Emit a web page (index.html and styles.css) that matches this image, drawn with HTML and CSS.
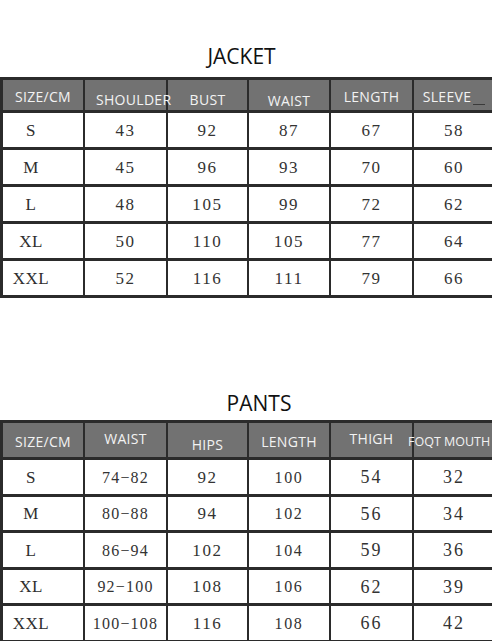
FILE: index.html
```html
<!DOCTYPE html>
<html lang="en">
<head>
<meta charset="utf-8">
<title>Size Chart</title>
<link rel="stylesheet" href="styles.css">
</head>
<body>
<main class="page">
  <section class="chart chart--jacket">
    <h2 class="title title--jacket">JACKET</h2>
    <table class="sizes">
      <colgroup>
        <col class="c1"><col class="c2"><col class="c3"><col class="c4"><col class="c5"><col class="c6">
      </colgroup>
      <thead>
        <tr>
          <th>SIZE/CM</th>
          <th class="h-left h-low">SHOULDER</th>
          <th class="h-low">BUST</th>
          <th class="h-lower">WAIST</th>
          <th>LENGTH</th>
          <th>SLEEVE<span class="dash"></span></th>
        </tr>
      </thead>
      <tbody>
        <tr><td class="size">S</td><td>43</td><td>92</td><td>87</td><td>67</td><td>58</td></tr>
        <tr><td class="size">M</td><td>45</td><td>96</td><td>93</td><td>70</td><td>60</td></tr>
        <tr><td class="size">L</td><td>48</td><td>105</td><td>99</td><td>72</td><td>62</td></tr>
        <tr><td class="size">XL</td><td>50</td><td>110</td><td>105</td><td>77</td><td>64</td></tr>
        <tr><td class="size">XXL</td><td>52</td><td>116</td><td>111</td><td>79</td><td>66</td></tr>
      </tbody>
    </table>
  </section>

  <section class="chart chart--pants">
    <h2 class="title title--pants">PANTS</h2>
    <table class="sizes sizes--pants">
      <colgroup>
        <col class="c1"><col class="c2"><col class="c3"><col class="c4"><col class="c5"><col class="c6">
      </colgroup>
      <thead>
        <tr>
          <th>SIZE/CM</th>
          <th class="h-high">WAIST</th>
          <th class="h-low">HIPS</th>
          <th>LENGTH</th>
          <th class="h-high">THIGH</th>
          <th class="h-left h-wide">FOQT MOUTH</th>
        </tr>
      </thead>
      <tbody>
        <tr><td class="size">S</td><td class="range">74−82</td><td>92</td><td class="small">100</td><td class="big">54</td><td class="big">32</td></tr>
        <tr><td class="size">M</td><td class="range">80−88</td><td>94</td><td class="small">102</td><td class="big">56</td><td class="big">34</td></tr>
        <tr><td class="size">L</td><td class="range">86−94</td><td>102</td><td class="small">104</td><td class="big">59</td><td class="big">36</td></tr>
        <tr><td class="size">XL</td><td class="range">92−100</td><td>108</td><td class="small">106</td><td class="big">62</td><td class="big">39</td></tr>
        <tr><td class="size">XXL</td><td class="range">100−108</td><td>116</td><td class="small">108</td><td class="big">66</td><td class="big">42</td></tr>
      </tbody>
    </table>
  </section>
</main>
</body>
</html>
```
FILE: styles.css
```css
* { box-sizing: border-box; }

html, body {
  margin: 0;
  padding: 0;
  background: #ffffff;
  overflow: hidden;
}

.page {
  width: 492px;
  height: 641px;
  overflow: hidden;
  padding-top: 46px;
}

.title {
  margin: 0;
  font-family: "Open Sans", "Liberation Sans", sans-serif;
  font-weight: 400;
  font-size: 21px;
  line-height: 21px;
  color: #111111;
  text-align: center;
}

.title--jacket {
  padding-right: 9px;
  margin-bottom: 10px;
}

.chart--pants {
  margin-top: 95px;
}

.title--pants {
  padding-left: 26px;
  margin-bottom: 6px;
}

.sizes {
  table-layout: fixed;
  width: 496px;
  border-collapse: separate;
  border-spacing: 0;
  border-top: 3px solid #2b2b2b;
  border-left: 3px solid #2b2b2b;
}

.c1 { width: 82px; }
.c2 { width: 83px; }
.c3 { width: 81px; }
.c4 { width: 82px; }
.c5 { width: 83px; }
.c6 { width: 82px; }

.sizes th,
.sizes td {
  border-right: 2px solid #2b2b2b;
  border-bottom: 3px solid #2b2b2b;
  padding: 0;
  white-space: nowrap;
  overflow: visible;
  text-align: center;
  vertical-align: middle;
}

.sizes th {
  height: 33px;
  padding-top: 3px;
  background: #727272;
  color: #f3f3f3;
  font-family: "Open Sans", "Liberation Sans", sans-serif;
  font-weight: 400;
  font-size: 14px;
  letter-spacing: 0.3px;
}

.sizes--pants th {
  height: 37px;
}

.sizes td {
  height: 37px;
  padding-top: 2px;
  font-family: "Liberation Serif", "Times New Roman", serif;
  font-size: 17px;
  letter-spacing: 1.6px;
  color: #333333;
}

.sizes--pants td {
  height: 36.5px;
}

.sizes td.size {
  padding-right: 24px;
  letter-spacing: 0.5px;
  color: #2e2e2e;
}

.sizes td.range {
  font-size: 16px;
  letter-spacing: 1.2px;
}

.sizes td.small {
  font-size: 16px;
}

.sizes td.big {
  font-size: 18px;
  letter-spacing: 2px;
}

.sizes th.h-left {
  text-align: left;
  padding-left: 11px;
}

.sizes th.h-wide {
  padding-left: 0;
  text-indent: -6px;
  font-size: 12.5px;
  letter-spacing: 0;
}

.sizes th.h-low { padding-top: 8px; }
.sizes th.h-lower { padding-top: 10px; }
.sizes th.h-high { padding-top: 0; padding-bottom: 4px; }

.dash {
  display: inline-block;
  width: 12px;
  height: 1px;
  margin-left: 2px;
  background: #3a3a3a;
  vertical-align: -3px;
}
```
